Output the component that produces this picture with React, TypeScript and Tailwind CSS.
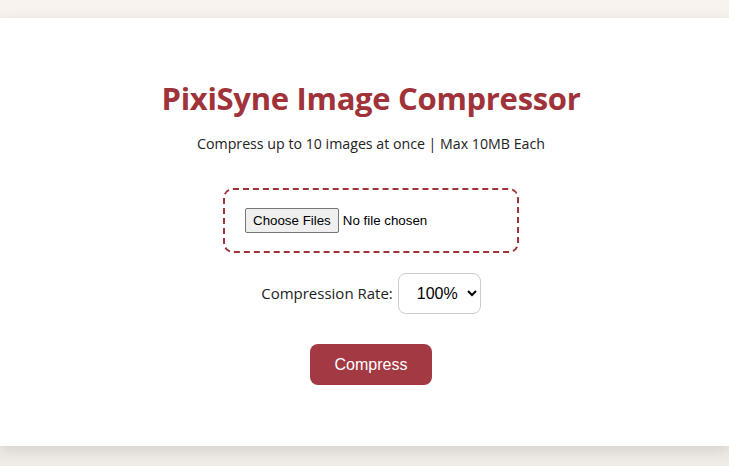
import React from 'react';

const App = () => {
  return (
    <div className="min-h-[466px] w-full bg-gradient-to-b from-[#f8f3ee] to-[#efebe7] pt-[18px] overflow-hidden">
      <div className="bg-white w-full h-[428px] shadow-[0_4px_14px_rgba(0,0,0,0.12)] flex flex-col items-center pt-[78px] pl-[13px] font-['Segoe_UI','Open_Sans',sans-serif]">
        <h1 className="text-[31px] leading-[40px] font-bold text-[#a0323a] tracking-[-0.3px] -mt-[18px]">
          PixiSyne Image Compressor
        </h1>
        <p className="mt-[14px] text-[14.2px] leading-[24px] text-[#222]">
          Compress up to 10 images at once | Max 10MB Each
        </p>

        <div className="mt-[32px] w-[296px] h-[65px] border-2 border-dashed border-[#a0323a] rounded-[10px] flex items-center px-[20px]">
          <input
            type="file"
            multiple
            accept="image/*"
            className="text-[13.333px] font-['Liberation_Sans',Arial,sans-serif] text-black file:px-[7px] file:py-[2px] file:mr-[4px] file:border file:border-[#767676] file:rounded-[2px] file:bg-[#efefef] file:text-black file:font-['Liberation_Sans',Arial,sans-serif]"
          />
        </div>

        <div className="mt-[20px] flex items-center gap-[5px]">
          <label className="text-[15px] text-[#222]">Compression Rate:</label>
          <select
            defaultValue="100"
            className="w-[83px] h-[41px] border border-[#ccc] rounded-[8px] pl-[14px] pr-[6px] text-[16px] font-['Liberation_Sans',Arial,sans-serif] text-black bg-white"
          >
            <option value="100">100%</option>
            <option value="90">90%</option>
            <option value="80">80%</option>
            <option value="70">70%</option>
            <option value="60">60%</option>
            <option value="50">50%</option>
          </select>
        </div>

        <button className="mt-[30px] w-[122px] h-[41px] rounded-[8px] bg-[#a33a43] text-white text-[16px] font-['Liberation_Sans',Arial,sans-serif]">
          Compress
        </button>
      </div>
    </div>
  );
};

export default App;
